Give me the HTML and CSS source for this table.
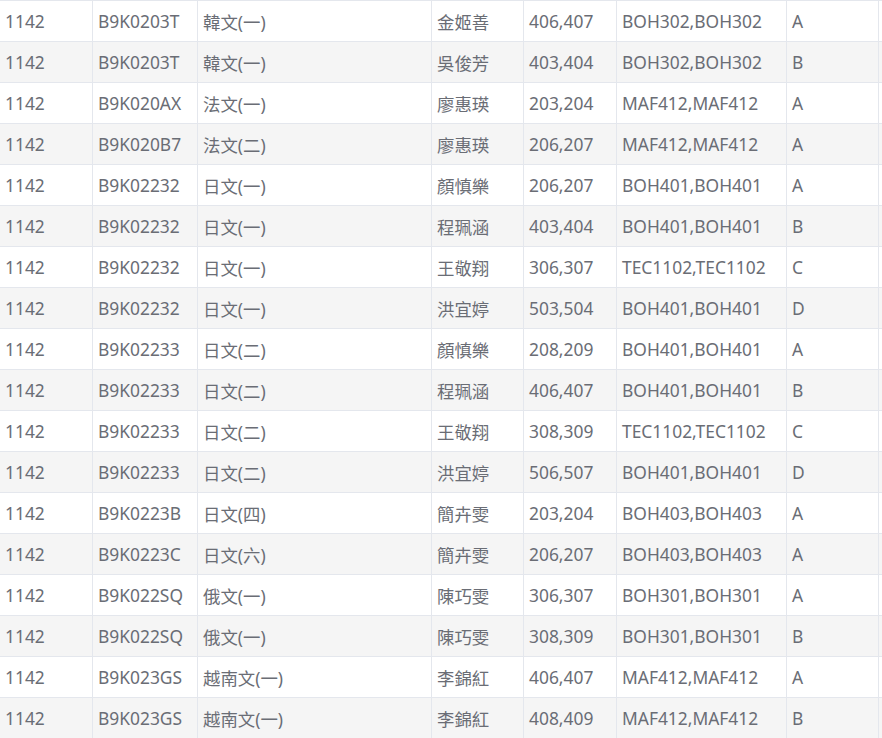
FILE: index.html
```html
<!DOCTYPE html>
<html lang="zh-TW">
<head>
  <meta charset="UTF-8">
  <title>開課清單</title>
  <link rel="stylesheet" href="styles.css">
</head>
<body>
  <table class="courses">
    <colgroup>
      <col class="c-term">
      <col class="c-code">
      <col class="c-name">
      <col class="c-teacher">
      <col class="c-time">
      <col class="c-room">
      <col class="c-class">
      <col class="c-more">
    </colgroup>
    <tbody>
      <tr><td>1142</td><td>B9K0203T</td><td>韓文(一)</td><td>金姬善</td><td>406,407</td><td>BOH302,BOH302</td><td>A</td><td></td></tr>
      <tr><td>1142</td><td>B9K0203T</td><td>韓文(一)</td><td>吳俊芳</td><td>403,404</td><td>BOH302,BOH302</td><td>B</td><td></td></tr>
      <tr><td>1142</td><td>B9K020AX</td><td>法文(一)</td><td>廖惠瑛</td><td>203,204</td><td>MAF412,MAF412</td><td>A</td><td></td></tr>
      <tr><td>1142</td><td>B9K020B7</td><td>法文(二)</td><td>廖惠瑛</td><td>206,207</td><td>MAF412,MAF412</td><td>A</td><td></td></tr>
      <tr><td>1142</td><td>B9K02232</td><td>日文(一)</td><td>顏慎樂</td><td>206,207</td><td>BOH401,BOH401</td><td>A</td><td></td></tr>
      <tr><td>1142</td><td>B9K02232</td><td>日文(一)</td><td>程珮涵</td><td>403,404</td><td>BOH401,BOH401</td><td>B</td><td></td></tr>
      <tr><td>1142</td><td>B9K02232</td><td>日文(一)</td><td>王敬翔</td><td>306,307</td><td>TEC1102,TEC1102</td><td>C</td><td></td></tr>
      <tr><td>1142</td><td>B9K02232</td><td>日文(一)</td><td>洪宜婷</td><td>503,504</td><td>BOH401,BOH401</td><td>D</td><td></td></tr>
      <tr><td>1142</td><td>B9K02233</td><td>日文(二)</td><td>顏慎樂</td><td>208,209</td><td>BOH401,BOH401</td><td>A</td><td></td></tr>
      <tr><td>1142</td><td>B9K02233</td><td>日文(二)</td><td>程珮涵</td><td>406,407</td><td>BOH401,BOH401</td><td>B</td><td></td></tr>
      <tr><td>1142</td><td>B9K02233</td><td>日文(二)</td><td>王敬翔</td><td>308,309</td><td>TEC1102,TEC1102</td><td>C</td><td></td></tr>
      <tr><td>1142</td><td>B9K02233</td><td>日文(二)</td><td>洪宜婷</td><td>506,507</td><td>BOH401,BOH401</td><td>D</td><td></td></tr>
      <tr><td>1142</td><td>B9K0223B</td><td>日文(四)</td><td>簡卉雯</td><td>203,204</td><td>BOH403,BOH403</td><td>A</td><td></td></tr>
      <tr><td>1142</td><td>B9K0223C</td><td>日文(六)</td><td>簡卉雯</td><td>206,207</td><td>BOH403,BOH403</td><td>A</td><td></td></tr>
      <tr><td>1142</td><td>B9K022SQ</td><td>俄文(一)</td><td>陳巧雯</td><td>306,307</td><td>BOH301,BOH301</td><td>A</td><td></td></tr>
      <tr><td>1142</td><td>B9K022SQ</td><td>俄文(一)</td><td>陳巧雯</td><td>308,309</td><td>BOH301,BOH301</td><td>B</td><td></td></tr>
      <tr><td>1142</td><td>B9K023GS</td><td>越南文(一)</td><td>李錦紅</td><td>406,407</td><td>MAF412,MAF412</td><td>A</td><td></td></tr>
      <tr><td>1142</td><td>B9K023GS</td><td>越南文(一)</td><td>李錦紅</td><td>408,409</td><td>MAF412,MAF412</td><td>B</td><td></td></tr>
    </tbody>
  </table>
</body>
</html>
```

FILE: styles.css
```css
html, body { margin: 0; background: #fff; overflow: hidden; }
body { font-family: "Noto Sans", "Noto Sans CJK TC", sans-serif; font-size: 17.4px; color: #6a6d75; }

.courses { border-collapse: separate; border-spacing: 0; table-layout: fixed; width: 882px; border-top: 1px solid #e4e7ed; }
.courses td { box-sizing: border-box; height: 41px; padding: 0 5px; border-right: 1px solid #e4e7ed; border-bottom: 1px solid #e4e7ed; white-space: nowrap; overflow: hidden; vertical-align: middle; }
.courses td:last-child { border-right: 0; padding: 0; }
.courses tr:nth-child(even) td { background: #f5f5f5; }

.c-term { width: 93px; }
.c-code { width: 105px; }
.c-name { width: 234px; }
.c-teacher { width: 92px; }
.c-time { width: 93px; }
.c-room { width: 170px; }
.c-class { width: 92px; }
.c-more { width: 3px; }
```
